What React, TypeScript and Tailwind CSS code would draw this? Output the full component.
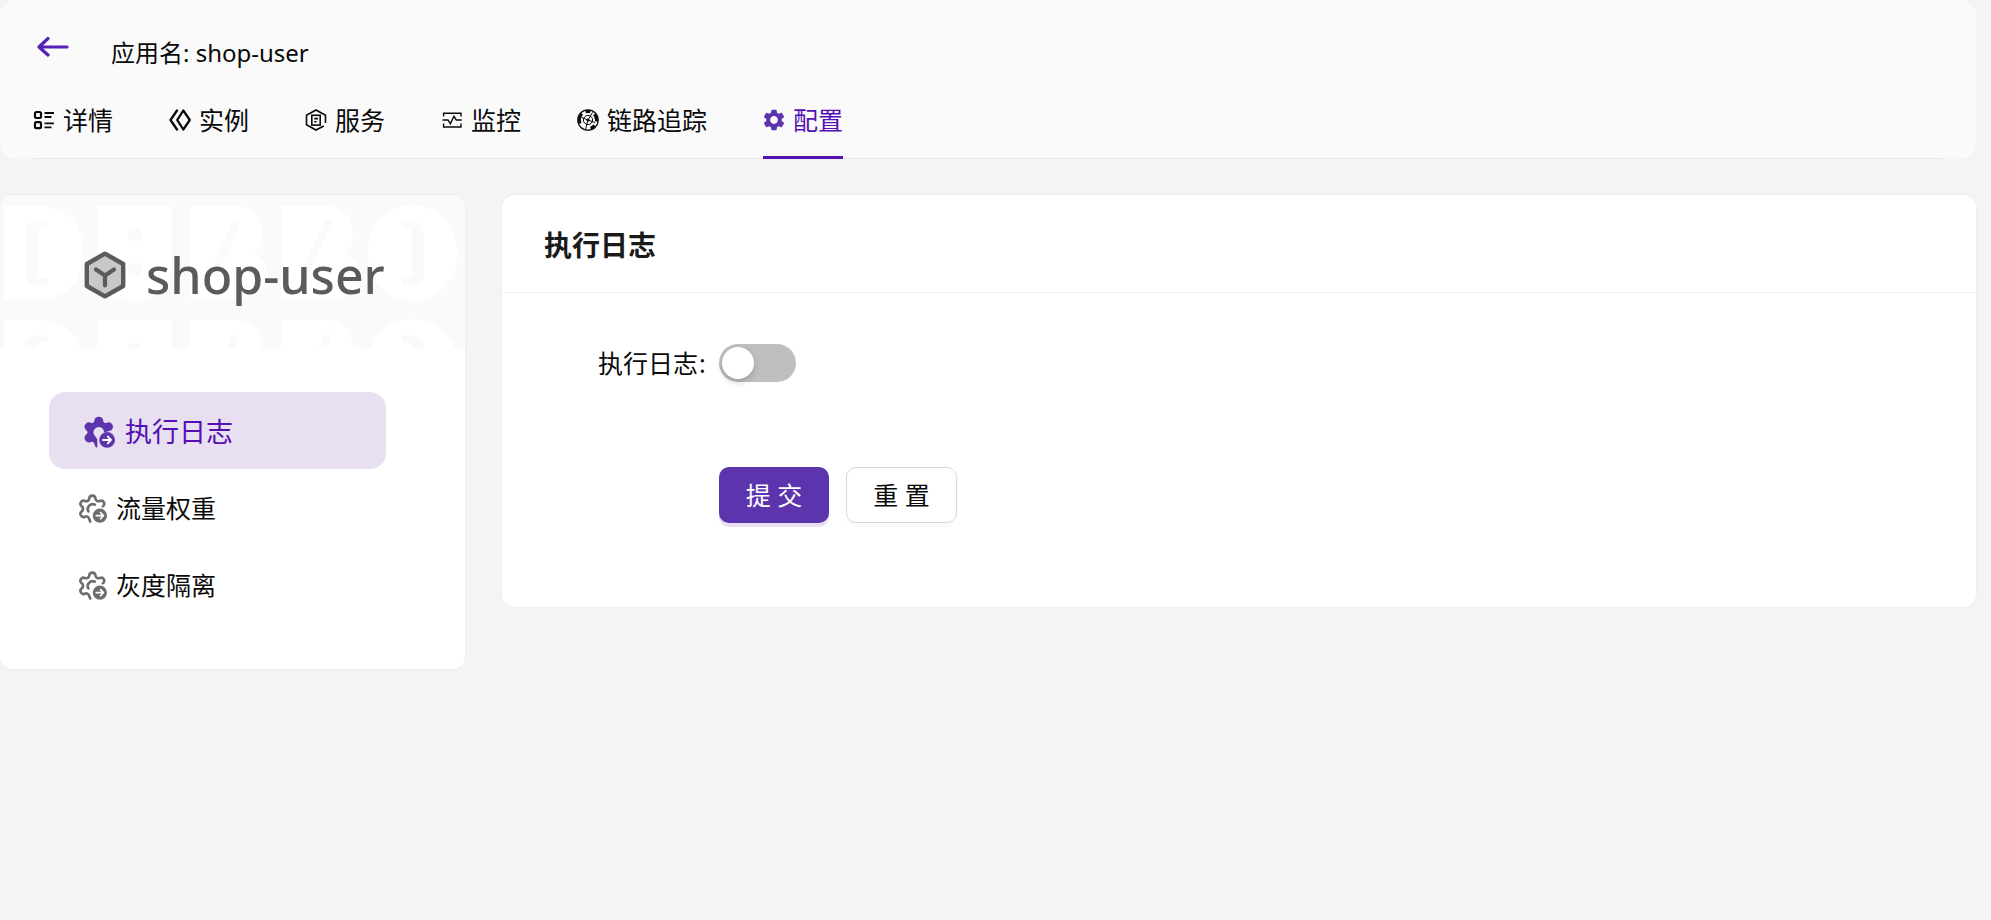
import React, { useState } from "react";

const BackIcon = () => (
  <svg viewBox="0 0 32 22" className="h-[22px] w-8" fill="none" stroke="currentColor" strokeWidth="3.2" strokeLinecap="round" strokeLinejoin="round">
    <path d="M30 11H3M11 2.5L2 11L11 19" />
  </svg>
);

const DetailIcon = () => (
  <svg viewBox="0 0 22 22" className="size-[22px]" fill="none" stroke="currentColor" strokeWidth="2.2">
    <rect x="2" y="3" width="6" height="6" rx="1.4" />
    <rect x="2" y="13.2" width="6" height="6" rx="1.4" />
    <path d="M11.5 4H21M11.5 8H18.5M11.5 14.4H21M11.5 18.4H18.5" strokeWidth="1.9" />
  </svg>
);

const InstanceIcon = () => (
  <svg viewBox="0 0 22 22" className="size-[22px]" fill="none" stroke="currentColor" strokeWidth="2.3" strokeLinejoin="round" strokeLinecap="round">
    <path d="M14.3 1.5L8.2 11L14.3 20.5L20.8 11Z" />
    <path d="M8 1.5L1.5 11L8 20.5" />
  </svg>
);

const ServiceIcon = () => (
  <svg viewBox="0 0 22 22" className="size-[22px]" fill="none" stroke="currentColor" strokeWidth="1.6">
    <path d="M20.5 14V6.2L11 1L1.5 6.2V15.8L11 21L18.8 17" />
    <rect x="6.8" y="6.3" width="8.4" height="9.8" />
    <path d="M9.3 9.6H13M9.3 12.8H11.5" />
  </svg>
);

const MonitorIcon = () => (
  <svg viewBox="0 0 22 22" className="size-[22px]" fill="none" stroke="currentColor" strokeWidth="1.4">
    <path d="M2.6 7.6V4.2H20V7.6M2.6 14.4V18H20V14.4" />
    <path d="M1.5 11H7L9.3 14.8L13 7.3L15.3 11H20.8" />
  </svg>
);

const TraceIcon = () => (
  <svg viewBox="0 0 22 22" className="size-[22px]" fill="none" stroke="currentColor">
    <circle cx="11" cy="11" r="10.2" strokeWidth="1.2" />
    <path strokeWidth="3" d="M3.2 14.5A8.6 8.6 0 0 1 5 4.8M8.6 2.8A8.6 8.6 0 0 1 13.4 2.8M17.2 5.2A8.6 8.6 0 0 1 19.4 12.4M17.6 16.6A8.6 8.6 0 0 1 13.6 19.2" />
    <circle cx="11" cy="11" r="4.6" strokeWidth="1" />
    <circle cx="11" cy="11" r="1.6" fill="currentColor" stroke="none" />
    <path d="M11 11L15.6 3.4M11 11L4.4 8.4M11 11L8.6 20M11 11L18 13.6" strokeWidth="1" />
  </svg>
);

const GearIcon = () => (
  <svg viewBox="1.8 1.8 20.4 20.4" className="size-[22px] text-[#5c34ad]" fill="currentColor">
    <path d="M19.14 12.94c.04-.3.06-.61.06-.94 0-.32-.02-.64-.07-.94l2.03-1.58c.18-.14.23-.41.12-.61l-1.92-3.32c-.12-.22-.37-.29-.59-.22l-2.39.96c-.5-.38-1.03-.7-1.62-.94l-.36-2.54c-.04-.24-.24-.41-.48-.41h-3.84c-.24 0-.43.17-.47.41l-.36 2.54c-.59.24-1.13.57-1.62.94l-2.39-.96c-.22-.08-.47 0-.59.22L2.74 8.87c-.12.21-.08.47.12.61l2.03 1.58c-.05.3-.09.63-.09.94s.02.64.07.94l-2.03 1.58c-.18.14-.23.41-.12.61l1.92 3.32c.12.22.37.29.59.22l2.39-.96c.5.38 1.03.7 1.62.94l.36 2.54c.05.24.24.41.48.41h3.84c.24 0 .44-.17.47-.41l.36-2.54c.59-.24 1.13-.56 1.62-.94l2.39.96c.22.08.47 0 .59-.22l1.92-3.32c.12-.22.07-.47-.12-.61l-2.01-1.58zM12 15.6c-1.98 0-3.6-1.62-3.6-3.6s1.62-3.6 3.6-3.6 3.6 1.62 3.6 3.6-1.62 3.6-3.6 3.6z" />
  </svg>
);

const GEAR_RIM =
  "M10.4 21.6L9.671 19.864a2.34 2.34 0 0 0-3.32-1.915 2.34 2.34 0 0 1-2.33-4.033 2.34 2.34 0 0 0 0-3.831A2.34 2.34 0 0 1 6.35 6.051a2.34 2.34 0 0 0 3.319-1.915 2.34 2.34 0 0 1 4.659 0 2.34 2.34 0 0 0 3.319 1.915 2.34 2.34 0 0 1 2.33 4.033";

const MenuIcon = ({ solid }: { solid: boolean }) => (
  <svg
    viewBox="1.9 0.8 21.2 21.9"
    className={solid ? "h-8 w-[31px] text-[#5c34ad]" : "h-[29px] w-7 text-[#6e6e6e]"}
    fill="none"
    stroke="currentColor"
    strokeWidth="2"
    strokeLinecap="round"
    strokeLinejoin="round"
  >
    {solid ? (
      <path fill="currentColor" strokeWidth="1.4" d={GEAR_RIM + "L16.2 11.2A4.3 4.3 0 1 0 8.6 14.6L10.2 16.8Z"} />
    ) : (
      <path d={GEAR_RIM + "M9 14A3.7 3.7 0 0 1 13.9 8.9"} />
    )}
    <circle cx="17.7" cy="17.2" r="5.4" fill="currentColor" stroke="none" />
    <path stroke="#ffffff" strokeWidth="1.3" d="M15 17.2H20M18.2 14.9L20.4 17.2L18.2 19.5" />
  </svg>
);

const AppIcon = () => (
  <svg viewBox="0 0 42 48" className="h-12 w-[42px]" fill="none" strokeLinejoin="round">
    <path d="M21 2.6L39.2 13V35L21 45.4L2.8 35V13Z" fill="#c8c8c8" stroke="#5b5b5b" strokeWidth="4.4" />
    <path d="M12 18.5L21 24.5L30 18.5M21 24.5V34.5" stroke="#5b5b5b" strokeWidth="4.2" strokeLinecap="round" />
  </svg>
);

const Backdrop = () => (
  <svg className="absolute inset-0 h-full w-full" aria-hidden="true">
    <defs>
      <pattern id="banner" width="465" height="114" y="10" patternUnits="userSpaceOnUse">
        <g fill="#ffffff">
          <path d="M4 1H42Q83 6 83 47Q83 90 42 94H4Z" />
          <path d="M97 1H172V56Q172 96 134 96Q97 96 97 56Z" />
          <path d="M190 1H238Q262 4 262 30Q262 42 254 48Q268 56 268 70Q266 92 238 94H190Z" />
          <path d="M281 1H329Q353 4 353 30Q353 42 345 48Q359 56 359 70Q357 92 329 94H281Z" />
          <rect x="368" y="0" width="89" height="96" rx="44" />
        </g>
        <g fill="#fafafa">
          <path d="M47 16H38Q25 16 25 28V67Q25 80 38 80H47V73H40Q37 72 37 67V29Q37 24 41 23H47Z" />
          <path d="M402 16H411Q424 16 424 28V67Q424 80 411 80H402V73H409Q412 72 412 67V29Q412 24 408 23H402Z" />
          <rect x="128" y="24" width="13" height="12" />
          <rect x="128" y="58" width="13" height="12" />
          <path d="M233 16H241L217 72H209Z" />
          <path d="M324 16H332L308 72H300Z" />
        </g>
      </pattern>
    </defs>
    <rect width="465" height="100%" fill="url(#banner)" />
  </svg>
);

const TABS: { name: string; Icon: React.FC }[] = [
  { name: "详情", Icon: DetailIcon },
  { name: "实例", Icon: InstanceIcon },
  { name: "服务", Icon: ServiceIcon },
  { name: "监控", Icon: MonitorIcon },
  { name: "链路追踪", Icon: TraceIcon },
  { name: "配置", Icon: GearIcon },
];

const MENU = ["执行日志", "流量权重", "灰度隔离"];

export default function App() {
  const [tab, setTab] = useState("配置");
  const [section, setSection] = useState("执行日志");
  const [logging, setLogging] = useState(false);

  return (
    <div className="min-h-screen bg-[#f4f4f4] pr-[15px] font-['Noto_Sans','Noto_Sans_CJK_SC',sans-serif] text-[25px] leading-8 text-[#0a0a0a]">
      <header className="rounded-2xl bg-[#fafafa] px-[33px]">
        <div className="flex items-start pt-9">
          <a href="#back" aria-label="返回" className="ml-1 mr-[42px] block text-[#5423b5]">
            <BackIcon />
          </a>
          <h1 className="text-[24px] leading-[34px]">应用名: shop-user</h1>
        </div>
        <nav className="mt-[25px] flex gap-14 border-b border-[#e9e9e9]">
          {TABS.map(({ name, Icon }) => (
            <button
              key={name}
              type="button"
              onClick={() => setTab(name)}
              className={
                tab === name
                  ? "-mb-px flex h-16 items-center gap-2 border-b-3 border-[#5410b5] pb-3 text-[#5410b5]"
                  : "-mb-px flex h-16 items-center gap-2 border-b-3 border-transparent pb-3"
              }
            >
              <Icon />
              <span>{name}</span>
            </button>
          ))}
        </nav>
      </header>

      <main className="mt-9 flex items-start gap-[37px]">
        <aside className="w-[465px] shrink-0 overflow-hidden rounded-xl bg-white pb-[46px] shadow-[0_0_2px_rgba(0,0,0,0.08)]">
          <div className="relative flex h-[153px] items-center bg-[#fafafa] pt-[6px] pl-[84px]">
            <Backdrop />
            <div className="relative flex items-center gap-5 text-[#5b5b5b]">
              <AppIcon />
              <h2 className="text-[50px] leading-[60px] font-medium">shop-user</h2>
            </div>
          </div>
          <nav className="mt-11 ml-[49px] flex w-[337px] flex-col">
            {MENU.map((name) => (
              <button
                key={name}
                type="button"
                onClick={() => setSection(name)}
                className={
                  section === name
                    ? "flex h-[77px] items-center gap-[10px] rounded-2xl bg-[#e8e0f0] pt-[2px] pl-[35px] text-[27px] text-[#5410b5]"
                    : "flex h-[77px] items-center gap-[9px] rounded-2xl pt-px pl-[30px]"
                }
              >
                <MenuIcon solid={section === name} />
                <span>{name}</span>
              </button>
            ))}
          </nav>
        </aside>

        <section className="min-w-0 flex-1 rounded-xl bg-white shadow-[0_0_2px_rgba(0,0,0,0.08)]">
          <h2 className="flex h-[98px] items-center border-b border-[#f0f0f0] px-[42px] pt-[2px] text-[28px] font-bold text-[#1a1a1a]">
            {section}
          </h2>
          <form className="px-24 pt-[51px] pb-[84px]" onSubmit={(e) => e.preventDefault()}>
            <div className="flex items-center">
              <label htmlFor="logging" className="w-[121px]">
                执行日志<span className="ml-px">:</span>
              </label>
              <input
                id="logging"
                type="checkbox"
                role="switch"
                checked={logging}
                onChange={(e) => setLogging(e.target.checked)}
                className="h-[38px] w-[77px] cursor-pointer appearance-none rounded-full bg-[#bfbfbf] p-[3px] before:block before:size-8 before:rounded-full before:bg-white before:shadow-[0_3px_7px_rgba(0,35,11,0.2)] checked:bg-[#5c34ad] checked:before:ml-[39px]"
              />
            </div>
            <div className="mt-[85px] ml-[121px] flex gap-[17px]">
              <button type="submit" className="h-14 w-[110px] rounded-[10px] bg-[#5c34ad] text-white shadow-[0_4px_0_#eadff2]">
                提 交
              </button>
              <button
                type="reset"
                onClick={() => setLogging(false)}
                className="h-14 w-[111px] rounded-[10px] border border-[#d9d9d9] bg-white shadow-[0_4px_0_rgba(0,0,0,0.02)]"
              >
                重 置
              </button>
            </div>
          </form>
        </section>
      </main>
    </div>
  );
}
